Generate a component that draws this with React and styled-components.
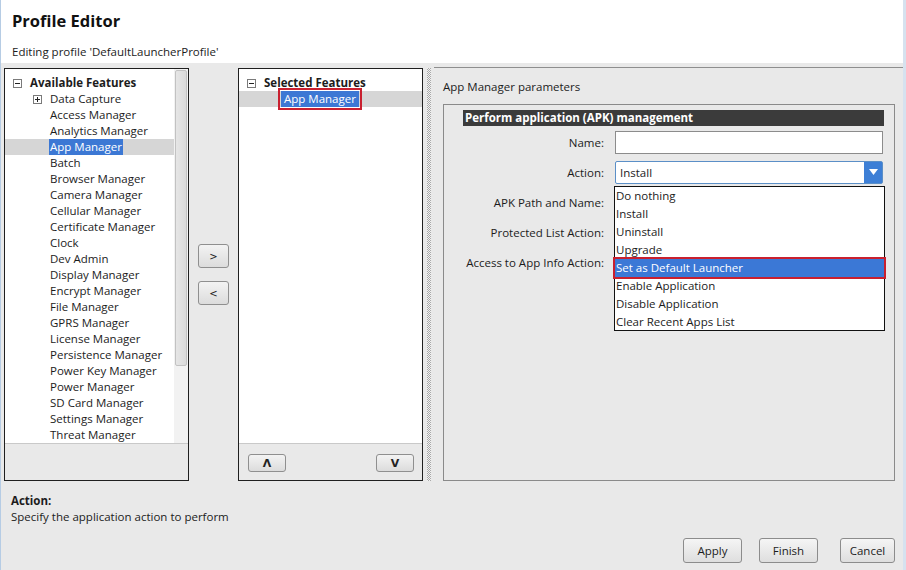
import React from "react";
import styled, { createGlobalStyle } from "styled-components";

const GlobalStyle = createGlobalStyle`
  body {
    margin: 0;
    font-family: "Open Sans", "Noto Sans", sans-serif;
    font-size: 12px;
    color: #1c1c1c;
  }
  * { box-sizing: border-box; }
`;

const Window = styled.div`
  width: 906px;
  height: 570px;
  background: #e9e9e9;
  border-left: 1px solid #b6cce4;
  border-right: 3px solid #d6e2ef;
  display: flex;
  flex-direction: column;
  overflow: hidden;
`;

const Header = styled.div`
  background: #fff;
  height: 63px;
  padding: 10px 0 0 11px;
`;

const Title = styled.div`
  font-size: 16.5px;
  font-weight: 700;
  line-height: 22px;
  color: #111;
`;

const Subtitle = styled.div`
  margin-top: 12px;
  line-height: 16px;
  font-size: 11.5px;
`;

const Body = styled.div`
  display: flex;
  height: 418px;
  padding: 5px 0 0 3px;
`;

const ListPanel = styled.div`
  width: 185px;
  height: 413px;
  border: 1px solid #1f1f1f;
  display: flex;
  flex-direction: column;
  background: #e9e9e9;
`;

const ListArea = styled.div`
  height: 375px;
  background: #fff;
  display: flex;
  border-bottom: 1px solid #c9c9c9;
`;

const Tree = styled.div`
  flex: 1;
  padding-top: 6px;
`;

const Scrollbar = styled.div`
  width: 14px;
  background: #f2f2f2;
  padding: 1px 1px 0 1px;
`;

const Thumb = styled.div`
  height: 296px;
  border: 1px solid #c2c2c2;
  border-radius: 2px;
  background: linear-gradient(90deg, #e6e6e6, #dadada);
`;

const Row = styled.div`
  height: 16px;
  line-height: 16px;
  display: flex;
  align-items: center;
  padding-left: ${(p) => p.$indent}px;
  background: ${(p) => (p.$selected ? "#d6d6d6" : "transparent")};
  font-size: 11.5px;
  white-space: nowrap;
`;

const GroupLabel = styled.span`
  font-weight: 700;
  margin-left: 8px;
`;

const ItemText = styled.span`
  padding: ${(p) => (p.$boxed ? "0 3px" : "0 1px")};
  color: ${(p) => (p.$hl ? "#fff" : "inherit")};
  background: ${(p) => (p.$hl ? "#3c78d4" : "transparent")};
  outline: ${(p) => (p.$boxed ? "2px solid #c9202f" : "none")};
  outline-offset: 1px;
`;

const Spacer = styled.span`
  display: inline-block;
  width: ${(p) => p.$w}px;
`;

const ExpandBox = ({ plus }) => (
  <svg width="9" height="9" viewBox="0 0 9 9" style={{ flex: "none" }}>
    <rect x="0.5" y="0.5" width="8" height="8" fill="#fff" stroke="#7a7a7a" />
    <line x1="2" y1="4.5" x2="7" y2="4.5" stroke="#222" />
    {plus && <line x1="4.5" y1="2" x2="4.5" y2="7" stroke="#222" />}
  </svg>
);

const MoveColumn = styled.div`
  width: 49px;
  height: 413px;
  display: flex;
  flex-direction: column;
  align-items: center;
  justify-content: center;
  gap: 13px;
`;

const SmallButton = styled.button`
  width: ${(p) => p.$w || 31}px;
  height: ${(p) => p.$h || 24}px;
  border: 1px solid #8f8f8f;
  border-radius: 3px;
  background: linear-gradient(#f3f3f3, #dcdcdc);
  font-family: "DejaVu Sans", sans-serif;
  font-size: ${(p) => p.$fs || 10}px;
  font-weight: ${(p) => (p.$bold ? 700 : 400)};
  color: #222;
  padding: 0;
  display: flex;
  align-items: center;
  justify-content: center;
`;

const OrderBar = styled.div`
  flex: 1;
  display: flex;
  justify-content: space-between;
  align-items: flex-start;
  padding: 10px 8px 0 9px;
`;

const Splitter = styled.div`
  width: 11px;
  height: 413px;
  display: flex;
  justify-content: center;
  padding-left: 1px;
`;

const Dots = styled.div`
  width: 4px;
  height: 100%;
  background: repeating-conic-gradient(#a9a9a9 0 25%, #f2f2f2 0 50%) 0 0 / 2px 2px;
`;

const ParamPanel = styled.div`
  flex: 1;
  height: 414px;
  margin-top: -1px;
  border-top: 1px solid #8e8e8e;
  display: flex;
  flex-direction: column;
  padding: 11px 8px 0 9px;
`;

const PanelCaption = styled.div`
  line-height: 16px;
  font-size: 11.5px;
  margin-bottom: 9px;
`;

const GroupBox = styled.div`
  flex: 1;
  position: relative;
  border: 1px solid #8a8a8a;
  padding: 5px 10px 0 0;
`;

const SectionBar = styled.div`
  margin-left: 19px;
  height: 16px;
  line-height: 16px;
  background: #3b3b3b;
  color: #fff;
  font-weight: 700;
  font-size: 11.5px;
  padding-left: 2px;
`;

const Form = styled.div`
  margin-top: 1px;
  display: grid;
  grid-template-columns: 160px 268px;
  grid-auto-rows: 30px;
  column-gap: 11px;
  align-items: center;
`;

const FieldLabel = styled.div`
  text-align: right;
  font-size: 11.5px;
`;

const TextInput = styled.div`
  height: 23px;
  background: #fff;
  border: 1px solid #8c8c8c;
`;

const Select = styled.div`
  height: 23px;
  background: #fff;
  border: 1px solid #5b8fc7;
  border-radius: 2px;
  display: flex;
  align-items: center;
  padding-left: 4px;
  font-size: 11.5px;
`;

const SelectValue = styled.span`
  flex: 1;
`;

const SelectArrow = styled.div`
  width: 18px;
  height: 100%;
  background: #3d7fd6;
  display: flex;
  align-items: center;
  justify-content: center;
`;

const Dropdown = styled.div`
  position: absolute;
  left: 170px;
  top: 81px;
  width: 271px;
  height: 145px;
  background: #fff;
  border: 1px solid #111;
`;

const Option = styled.div`
  height: 18px;
  line-height: 18px;
  padding-left: 1px;
  font-size: 11.5px;
  color: ${(p) => (p.$active ? "#fff" : "#1c1c1c")};
  background: ${(p) => (p.$active ? "#3b78d6" : "transparent")};
  outline: ${(p) => (p.$active ? "2px solid #c9202f" : "none")};
`;

const Footer = styled.div`
  flex: 1;
  padding: 12px 8px 0 10px;
  display: flex;
  flex-direction: column;
`;

const HelpTitle = styled.div`
  font-weight: 700;
  line-height: 16px;
  font-size: 11.5px;
`;

const HelpText = styled.div`
  line-height: 16px;
  font-size: 11.5px;
`;

const ButtonBar = styled.div`
  margin-top: 13px;
  display: flex;
  justify-content: flex-end;
`;

const DialogButton = styled.button`
  width: ${(p) => p.$w}px;
  height: 25px;
  margin-left: ${(p) => p.$gap || 0}px;
  border: 1px solid #8c8c8c;
  border-radius: 3px;
  background: linear-gradient(#f5f5f5, #dedede);
  font-family: "Open Sans", sans-serif;
  font-size: 11.5px;
  color: #1c1c1c;
  padding: 0;
`;

const features = [
  "Access Manager",
  "Analytics Manager",
  "App Manager",
  "Batch",
  "Browser Manager",
  "Camera Manager",
  "Cellular Manager",
  "Certificate Manager",
  "Clock",
  "Dev Admin",
  "Display Manager",
  "Encrypt Manager",
  "File Manager",
  "GPRS Manager",
  "License Manager",
  "Persistence Manager",
  "Power Key Manager",
  "Power Manager",
  "SD Card Manager",
  "Settings Manager",
  "Threat Manager",
];

const actions = [
  "Do nothing",
  "Install",
  "Uninstall",
  "Upgrade",
  "Set as Default Launcher",
  "Enable Application",
  "Disable Application",
  "Clear Recent Apps List",
];

export default function App() {
  return (
    <Window>
      <GlobalStyle />
      <Header>
        <Title>Profile Editor</Title>
        <Subtitle>Editing profile 'DefaultLauncherProfile'</Subtitle>
      </Header>

      <Body>
        <ListPanel>
          <ListArea>
            <Tree>
              <Row $indent={8}>
                <ExpandBox />
                <GroupLabel>Available Features</GroupLabel>
              </Row>
              <Row $indent={28}>
                <ExpandBox plus />
                <Spacer $w={7} />
                <ItemText>Data Capture</ItemText>
              </Row>
              {features.map((f) => (
                <Row key={f} $indent={44} $selected={f === "App Manager"}>
                  <ItemText $hl={f === "App Manager"}>{f}</ItemText>
                </Row>
              ))}
            </Tree>
            <Scrollbar>
              <Thumb />
            </Scrollbar>
          </ListArea>
        </ListPanel>

        <MoveColumn>
          <SmallButton>&gt;</SmallButton>
          <SmallButton>&lt;</SmallButton>
        </MoveColumn>

        <ListPanel>
          <ListArea>
            <Tree>
              <Row $indent={8}>
                <ExpandBox />
                <GroupLabel>Selected Features</GroupLabel>
              </Row>
              <Row $indent={42} $selected>
                <ItemText $hl $boxed>App Manager</ItemText>
              </Row>
            </Tree>
          </ListArea>
          <OrderBar>
            <SmallButton $w={38} $h={18} $fs={11} $bold>Λ</SmallButton>
            <SmallButton $w={38} $h={18} $fs={11} $bold>V</SmallButton>
          </OrderBar>
        </ListPanel>

        <Splitter>
          <Dots />
        </Splitter>

        <ParamPanel>
          <PanelCaption>App Manager parameters</PanelCaption>
          <GroupBox>
            <SectionBar>Perform application (APK) management</SectionBar>
            <Form>
              <FieldLabel>Name:</FieldLabel>
              <TextInput />
              <FieldLabel>Action:</FieldLabel>
              <Select>
                <SelectValue>Install</SelectValue>
                <SelectArrow>
                  <svg width="9" height="6" viewBox="0 0 9 6">
                    <path d="M0 0 L9 0 L4.5 6 Z" fill="#fff" />
                  </svg>
                </SelectArrow>
              </Select>
              <FieldLabel>APK Path and Name:</FieldLabel>
              <div />
              <FieldLabel>Protected List Action:</FieldLabel>
              <div />
              <FieldLabel>Access to App Info Action:</FieldLabel>
              <div />
            </Form>
            <Dropdown>
              {actions.map((a) => (
                <Option key={a} $active={a === "Set as Default Launcher"}>
                  {a}
                </Option>
              ))}
            </Dropdown>
          </GroupBox>
        </ParamPanel>
      </Body>

      <Footer>
        <HelpTitle>Action:</HelpTitle>
        <HelpText>Specify the application action to perform</HelpText>
        <ButtonBar>
          <DialogButton $w={59}>Apply</DialogButton>
          <DialogButton $w={59} $gap={17}>Finish</DialogButton>
          <DialogButton $w={55} $gap={22}>Cancel</DialogButton>
        </ButtonBar>
      </Footer>
    </Window>
  );
}
